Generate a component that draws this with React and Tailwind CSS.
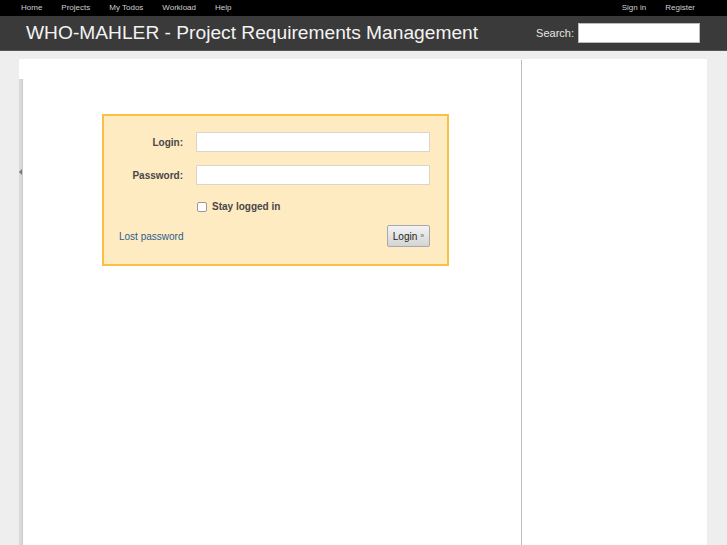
import React from "react";

export default function App() {
  const sans = { fontFamily: '"Liberation Sans", Arial, sans-serif' };
  return (
    <div className="min-h-[545px] h-[545px] overflow-hidden bg-[#eeeeee] flex flex-col" style={sans}>
      {/* top menu */}
      <div className="h-4 bg-black flex items-center justify-between text-[8px] text-[#cfcfcf] shrink-0">
        <div className="flex items-center gap-[19px] pl-[21px]">
          <span>Home</span>
          <span>Projects</span>
          <span>My Todos</span>
          <span>Workload</span>
          <span>Help</span>
        </div>
        <div className="flex items-center gap-[19px] pr-[32px]">
          <span>Sign in</span>
          <span>Register</span>
        </div>
      </div>
      {/* header */}
      <div className="h-[35px] bg-[#3a3a3a] flex items-center justify-between shrink-0 border-b border-[#555]">
        <h1 className="pl-[26px] text-[19.2px] text-[#f3f3f3] leading-none">WHO-MAHLER - Project Requirements Management</h1>
        <div className="flex items-center pr-[27px] gap-[4px]">
          <span className="text-[11px] text-[#e6e6e6]">Search:</span>
          <input className="w-[122px] h-[20px] bg-white border border-[#bbb] outline-none" />
        </div>
      </div>
      {/* body */}
      <div className="flex-1 flex pt-[8px]">
        <div className="w-[19px] shrink-0" />
        <div className="flex-1 bg-white flex min-w-0">
          {/* left collapse bar */}
          <div className="w-[4px] shrink-0 pt-[20px] flex flex-col">
            <div className="flex-1 bg-[#d9d9d9] border-r border-[#c9c9c9] relative">
              <div className="absolute left-0 top-[90px] w-0 h-0 border-y-[3px] border-y-transparent border-r-[3px] border-r-[#777]" />
            </div>
          </div>
          {/* content */}
          <div className="w-[498px] shrink-0 pt-[55px] pl-[79px]">
            <div className="w-[347px] border-2 border-[#fbbf45] bg-[#ffebc2] pl-[15px] pr-[17px] pt-[16px] pb-[17px]">
              <div className="grid grid-cols-[64px_234px] gap-x-[13px] items-center">
                <label className="text-right font-bold text-[10px] text-[#474747]">Login:</label>
                <input className="h-[20px] bg-white border border-[#dcd6c8] outline-none" />
                <div className="h-[13px] col-span-2" />
                <label className="text-right font-bold text-[10px] text-[#474747]">Password:</label>
                <input className="h-[20px] bg-white border border-[#dcd6c8] outline-none" />
                <div className="h-[14px] col-span-2" />
                <div />
                <div className="flex items-center gap-[5px] pl-[1px]">
                  <span className="w-[10px] h-[10px] bg-white border border-[#999] rounded-[2px] inline-block" />
                  <span className="font-bold text-[10px] text-[#474747]">Stay logged in</span>
                </div>
              </div>
              <div className="flex items-center justify-between mt-[11px]">
                <span className="text-[10px] text-[#2c5c8c]">Lost password</span>
                <button className="h-[22px] w-[43px] rounded-[2px] border border-[#a8a8a8] bg-gradient-to-b from-[#f4f4f4] to-[#d4d4d4] text-[10px] text-[#222] flex items-center justify-center gap-[3px]">
                  Login <span className="text-[7px] text-[#666]">»</span>
                </button>
              </div>
            </div>
          </div>
          {/* sidebar */}
          <div className="flex-1 border-l border-[#bcbcbc] mt-[1px]" />
        </div>
        <div className="w-[20px] shrink-0" />
      </div>
    </div>
  );
}
